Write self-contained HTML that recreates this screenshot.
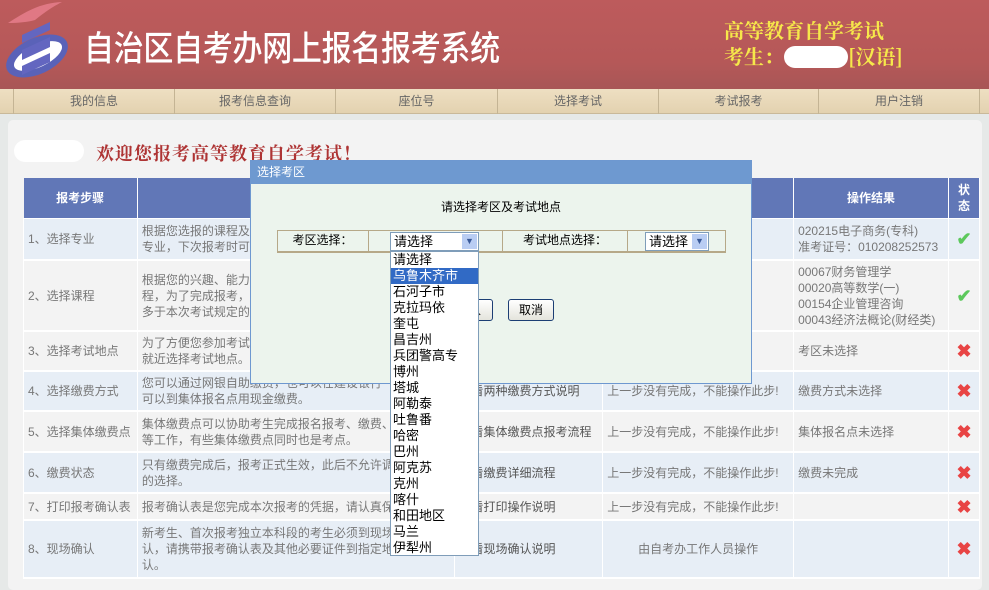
<!DOCTYPE html>
<html><head><meta charset="utf-8"><style>
*{margin:0;padding:0;box-sizing:border-box}
body{width:989px;height:578px;overflow:hidden;background:#e6e9e8;font-family:"Liberation Sans","Noto Sans CJK SC","WenQuanYi Zen Hei",sans-serif;font-size:12px;color:#777;position:relative}
.abs{position:absolute}
#hdr{left:0;top:0;width:989px;height:89px;background:linear-gradient(#bd5b5c,#b55858 70%,#a85656)}
#title{left:84px;top:20px;font-size:30px;color:#fff;font-family:"Noto Sans CJK SC",sans-serif;font-weight:500;letter-spacing:-0.3px;line-height:44px;transform:scaleY(1.15);transform-origin:left top}
#rt{left:724px;top:17px;color:#f6e84a;font-size:20px;font-weight:bold;line-height:26px;font-family:"Noto Serif CJK SC","Noto Sans CJK SC",serif}
#nav{left:0;top:89px;width:989px;height:25px;background:linear-gradient(#eedfc2,#e3d2b0);border-bottom:1px solid #c9b99a}
#nav div{position:absolute;top:0;height:25px;line-height:24px;text-align:center;color:#666;font-size:12px;border-left:1px solid #c4b494}
#panel{left:8px;top:120px;width:974px;height:470px;background:#f3f3f3;border-radius:5px}
#wel{left:96px;top:140px;font-size:18px;color:#ae3434;font-weight:bold;font-family:"Noto Serif CJK SC",serif;letter-spacing:1px}
table{position:absolute;left:23px;top:178px;border-collapse:collapse;width:957px}
td{border:2px solid #f3f3f3;border-width:0 1px 2px 1px;border-color:#fff;padding:0 4px;line-height:16px;vertical-align:middle}
th{background:#6177b7;color:#fff;font-weight:bold;font-size:12px;height:40px;border-right:1px solid #fff;border-bottom:1px solid #fff}
tr.a td{background:#e7eef6}
tr.b td{background:#f3f3f3}
.ok{color:#5cc85c;font-size:18px;font-weight:bold;text-align:center}
.no{color:#e84444;font-size:18px;font-weight:bold;text-align:center}
#dlg{left:250px;top:160px;width:502px;height:224px;background:#ecf4ed;border:1px solid #6e98d0}
#dt{left:0;top:0;width:500px;height:23px;background:#6e99d0;color:#fff;font-size:12px;line-height:23px;padding-left:6px}
.btn{position:absolute;top:138px;height:22px;border:1px solid #1c3e74;border-radius:3px;background:linear-gradient(#fff,#e4e4dc);color:#000;font-size:12px;line-height:20px;text-align:center}
.sel{position:absolute;height:19px;background:#fff;border:1px solid #7f9db9;color:#000;font-size:13px;line-height:17px;padding-left:3px}
.sel i{position:absolute;right:1px;top:1px;width:15px;height:15px;background:#b9cdf3;font-style:normal;font-size:9px;color:#3a5a9a;text-align:center;line-height:15px}
#dd{left:390px;top:251px;width:89px;height:305px;background:#fff;border:1px solid #7f9db9;color:#000;font-size:13px}
#dd div{height:16px;line-height:16px;padding-left:2px}
</style></head><body>
<div id="hdr" class="abs"></div>
<svg class="abs" style="left:0;top:0" width="80" height="90" viewBox="0 0 80 90">
<path d="M8 23 C25 12 40 3 62 2 C50 8 40 16 35 20 C28 22 18 23 8 23Z" fill="#e07884"/>
<ellipse cx="37" cy="56" rx="33" ry="18" fill="#5a62b8" transform="rotate(-25 37 56)"/>
<ellipse cx="38" cy="56" rx="26" ry="11" fill="#fff" transform="rotate(-25 38 56)"/>
<path d="M22 35 L50 22 L50 30 L22 43Z M22 50 L50 37 L50 47 L22 60Z M22 66 L50 53 L50 62 L22 75Z" fill="#6366c0"/>
</svg>
<div id="title" class="abs">自治区自考办网上报名报考系统</div>
<div id="rt" class="abs">高等教育自学考试<br>考生：<span style="display:inline-block;width:64px;height:22px;background:#fff;border-radius:11px;vertical-align:-4px"></span>[汉语]</div>
<div id="nav" class="abs">
<div style="left:13px;width:161px">我的信息</div>
<div style="left:174px;width:161px">报考信息查询</div>
<div style="left:335px;width:162px">座位号</div>
<div style="left:497px;width:161px">选择考试</div>
<div style="left:658px;width:160px">考试报考</div>
<div style="left:818px;width:162px;border-right:1px solid #c4b494">用户注销</div>
</div>
<div id="panel" class="abs"></div>
<div class="abs" style="left:14px;top:140px;width:70px;height:22px;background:#fff;border-radius:11px"></div>
<div id="wel" class="abs">欢迎您报考高等教育自学考试！</div>
<table>
<tr><th style="width:114px">报考步骤</th><th style="width:318px"></th><th style="width:148px"></th><th style="width:191px"></th><th style="width:155px">操作结果</th><th style="width:31px;line-height:16px">状<br>态</th></tr>
<tr class="a" style="height:42px"><td>1、选择专业</td><td>根据您选报的课程及<br>专业，下次报考时可</td><td></td><td></td><td>020215电子商务(专科)<br>准考证号：010208252573</td><td class="ok">✔</td></tr>
<tr class="b" style="height:71px"><td>2、选择课程</td><td>根据您的兴趣、能力<br>程，为了完成报考，<br>多于本次考试规定的</td><td></td><td></td><td>00067财务管理学<br>00020高等数学(一)<br>00154企业管理咨询<br>00043经济法概论(财经类)</td><td class="ok">✔</td></tr>
<tr class="b" style="height:40px"><td>3、选择考试地点</td><td>为了方便您参加考试<br>就近选择考试地点。</td><td></td><td></td><td>考区未选择</td><td class="no">✖</td></tr>
<tr class="a" style="height:40px"><td>4、选择缴费方式</td><td>您可以通过网银自助缴费，也可以在建设银行<br>可以到集体报名点用现金缴费。</td><td style="color:#555">查看两种缴费方式说明</td><td>上一步没有完成，不能操作此步!</td><td>缴费方式未选择</td><td class="no">✖</td></tr>
<tr class="b" style="height:41px"><td>5、选择集体缴费点</td><td>集体缴费点可以协助考生完成报名报考、缴费、<br>等工作，有些集体缴费点同时也是考点。</td><td style="color:#555">查看集体缴费点报考流程</td><td>上一步没有完成，不能操作此步!</td><td>集体报名点未选择</td><td class="no">✖</td></tr>
<tr class="a" style="height:41px"><td>6、缴费状态</td><td>只有缴费完成后，报考正式生效，此后不允许调<br>的选择。</td><td style="color:#555">查看缴费详细流程</td><td>上一步没有完成，不能操作此步!</td><td>缴费未完成</td><td class="no">✖</td></tr>
<tr class="b" style="height:27px"><td>7、打印报考确认表</td><td>报考确认表是您完成本次报考的凭据，请认真保</td><td style="color:#555">查看打印操作说明</td><td>上一步没有完成，不能操作此步!</td><td></td><td class="no">✖</td></tr>
<tr class="a" style="height:58px"><td>8、现场确认</td><td>新考生、首次报考独立本科段的考生必须到现场<br>认，请携带报考确认表及其他必要证件到指定地<br>认。</td><td style="color:#555">查看现场确认说明</td><td style="text-align:center">由自考办工作人员操作</td><td></td><td class="no">✖</td></tr>
</table>
<div id="dlg" class="abs">
<div id="dt" class="abs">选择考区</div>
<div class="abs" style="left:0;top:37px;width:500px;text-align:center;color:#000;font-size:12px">请选择考区及考试地点</div>
<div class="abs" style="left:26px;top:69px;width:449px;height:23px;border:1px solid #b6a888;border-width:1px 1px 2px 1px"></div>
<div class="abs" style="left:26px;top:69px;width:92px;height:23px;border-right:1px solid #b6a888;text-align:center;line-height:21px;color:#000">考区选择：</div>
<div class="abs" style="left:251px;top:69px;width:126px;height:23px;border-left:1px solid #b6a888;border-right:1px solid #b6a888;text-align:center;line-height:21px;color:#000">考试地点选择：</div>
<div class="sel" style="left:139px;top:71px;width:89px">请选择<i>▼</i></div>
<div class="sel" style="left:394px;top:71px;width:64px">请选择<i>▼</i></div>
<div class="btn" style="left:194px;width:48px">确认</div>
<div class="btn" style="left:257px;width:46px">取消</div>
</div>
<div id="dd" class="abs">
<div>请选择</div><div style="background:#316ac5;color:#fff">乌鲁木齐市</div><div>石河子市</div><div>克拉玛依</div><div>奎屯</div><div>昌吉州</div><div>兵团警高专</div><div>博州</div><div>塔城</div><div>阿勒泰</div><div>吐鲁番</div><div>哈密</div><div>巴州</div><div>阿克苏</div><div>克州</div><div>喀什</div><div>和田地区</div><div>马兰</div><div>伊犁州</div>
</div>
</body></html>
